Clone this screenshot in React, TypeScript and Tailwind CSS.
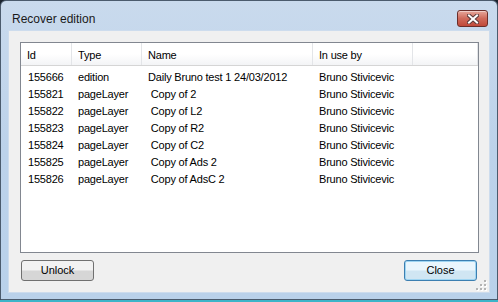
import React from 'react'

const FONT = { fontFamily: '"Liberation Sans", Arial, sans-serif' }

type Row = { id: string; type: string; name: string; user: string }

const ROWS: Row[] = [
  { id: '155666', type: 'edition', name: 'Daily Bruno test 1 24/03/2012', user: 'Bruno Stivicevic' },
  { id: '155821', type: 'pageLayer', name: ' Copy of 2', user: 'Bruno Stivicevic' },
  { id: '155822', type: 'pageLayer', name: ' Copy of L2', user: 'Bruno Stivicevic' },
  { id: '155823', type: 'pageLayer', name: ' Copy of R2', user: 'Bruno Stivicevic' },
  { id: '155824', type: 'pageLayer', name: ' Copy of C2', user: 'Bruno Stivicevic' },
  { id: '155825', type: 'pageLayer', name: ' Copy of Ads 2', user: 'Bruno Stivicevic' },
  { id: '155826', type: 'pageLayer', name: ' Copy of AdsC 2', user: 'Bruno Stivicevic' },
]

function CloseX() {
  return (
    <svg width="12" height="10" viewBox="0 0 12 10">
      <path d="M2 1.5 L10 8.5 M10 1.5 L2 8.5" stroke="#5b3a3a" strokeWidth="4" strokeLinecap="square" />
      <path d="M2 1.5 L10 8.5 M10 1.5 L2 8.5" stroke="#ffffff" strokeWidth="2" strokeLinecap="square" />
    </svg>
  )
}

function Grip() {
  const dots = [
    [8, 0],
    [4, 4], [8, 4],
    [0, 8], [4, 8], [8, 8],
  ]
  return (
    <svg width="11" height="11" viewBox="0 0 11 11">
      {dots.map(([x, y], i) => (
        <g key={i}>
          <rect x={x + 1} y={y + 1} width="2" height="2" fill="#ffffff" />
          <rect x={x} y={y} width="2" height="2" fill="#b4b4b4" />
        </g>
      ))}
    </svg>
  )
}

function HeaderCell({ label, width }: { label: string; width: string }) {
  return (
    <div className={`${width} h-full shrink-0 border-r border-[#e3e5e8] pl-[6px] pt-[6px] leading-[13px]`}>
      {label}
    </div>
  )
}

export default function App() {
  return (
    <div className="w-[498px] h-[302px] bg-[#1c2530] flex flex-col text-black" style={FONT}>
      <div className="h-[300px] rounded-t-[6px] border border-[#4b5b6d] bg-gradient-to-b from-[#c9daed] via-[#bcd2ea] to-[#b9d1ea] flex flex-col">
        {/* title bar */}
        <div className="h-[29px] flex items-start justify-between pl-[11px] pr-[9px]">
          <div className="text-[12px] leading-[14px] mt-[11px] text-[#1a1a1a]">Recover edition</div>
          <div className="mt-[9px] w-[31px] h-[17px] rounded-[3px] border border-[#6b2e2a] bg-gradient-to-b from-[#e6a79b] via-[#cf6a5b] to-[#c0493a] flex items-center justify-center shadow-[inset_0_1px_0_rgba(255,255,255,0.45)]">
            <CloseX />
          </div>
        </div>

        {/* client area */}
        <div className="mx-[7px] h-[263px] bg-[#f0f0f0] border border-[#cddced] flex flex-col relative">
          <div className="ml-[11px] mt-[11px] w-[459px] h-[211px] border border-[#828790] bg-white text-[11px] tracking-[-0.2px] flex flex-col">
            <div className="h-[23px] flex border-b border-[#d5d5d5] bg-gradient-to-b from-white from-50% to-[#f3f4f6]">
              <HeaderCell label="Id" width="w-[51px]" />
              <HeaderCell label="Type" width="w-[70px]" />
              <HeaderCell label="Name" width="w-[171px]" />
              <HeaderCell label="In use by" width="w-[100px]" />
              <div className="w-[65px] h-full border-r border-[#e3e5e8]" />
            </div>
            <div className="pt-[3px] flex flex-col">
              {ROWS.map((r) => (
                <div key={r.id} className="h-[17px] leading-[17px] flex">
                  <div className="w-[51px] pl-[7px] shrink-0">{r.id}</div>
                  <div className="w-[70px] pl-[6px] shrink-0">{r.type}</div>
                  <div className="w-[171px] pl-[6px] shrink-0 whitespace-pre">{r.name}</div>
                  <div className="w-[100px] pl-[6px] shrink-0">{r.user}</div>
                </div>
              ))}
            </div>
          </div>

          <div className="mt-[7px] mx-[12px] flex justify-between text-[11px]">
            <button className="w-[73px] h-[21px] rounded-[3px] border border-[#707070] bg-gradient-to-b from-[#f2f2f2] from-45% to-[#d6d6d6] to-55% leading-[19px]">
              Unlock
            </button>
            <button className="w-[73px] h-[21px] rounded-[3px] border border-[#3c7fb1] bg-gradient-to-b from-[#eaf6fd] from-45% to-[#d0e6f3] to-55% leading-[19px] shadow-[inset_0_0_0_1px_#9fd5f2]">
              Close
            </button>
          </div>

          <div className="absolute right-[2px] bottom-[1px]">
            <Grip />
          </div>
        </div>
      </div>
      <div className="h-[2px] bg-[#3cb4c8]" />
    </div>
  )
}
